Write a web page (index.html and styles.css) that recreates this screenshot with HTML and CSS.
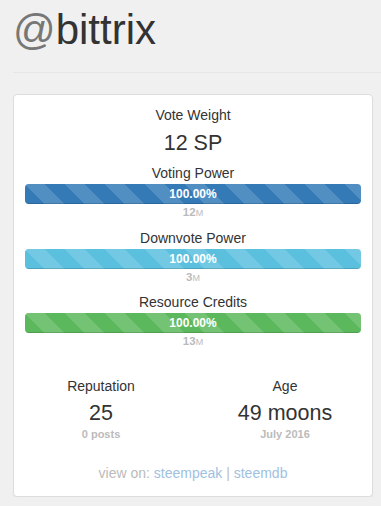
FILE: index.html
```html
<!DOCTYPE html>
<html>
  <head>
    <meta charset="utf-8" />
    <meta name="viewport" content="width=device-width, initial-scale=1" />
    <link rel="stylesheet" href="styles.css">
  </head>

  <body>
    <header class="page-head">
        <h1><span class="at">@</span>bittrix</h1>
    </header>
    <div class="panel">
        <div class="stat-title">Vote Weight</div>
        <div class="stat-value">12 SP</div>

        <div class="meters">
            <div class="meter">
                <div class="stat-title">Voting Power</div>
                <div class="progress"><div class="bar bar-blue">100.00%</div></div>
                <div class="sub">12<small>M</small></div>
            </div>
            <div class="meter">
                <div class="stat-title">Downvote Power</div>
                <div class="progress"><div class="bar bar-info">100.00%</div></div>
                <div class="sub">3<small>M</small></div>
            </div>
            <div class="meter">
                <div class="stat-title">Resource Credits</div>
                <div class="progress"><div class="bar bar-green">100.00%</div></div>
                <div class="sub">13<small>M</small></div>
            </div>
        </div>

        <div class="stat-row">
            <div class="col">
                <div class="stat-title">Reputation</div>
                <div class="stat-value">25</div>
                <div class="note">0 posts</div>
            </div>
            <div class="col">
                <div class="stat-title">Age</div>
                <div class="stat-value">49 moons</div>
                <div class="note">July 2016</div>
            </div>
        </div>

        <div class="links">view on: <a href="#">steempeak</a> | <a href="#">steemdb</a></div>
    </div>
  </body>
</html>
```

FILE: styles.css
```css
body {
  margin: 0;
  background: #f0f0f0;
  color: #333;
  font-family: "Liberation Sans", Arial, Helvetica, sans-serif;
  font-size: 14px;
  line-height: 20px;
}
.page-head {
  margin-left: 13px;
  border-bottom: 1px solid #e6e6e6;
  padding-top: 7px;
  padding-bottom: 20px;
}
.page-head h1 {
  margin: 0;
  font-size: 42px;
  line-height: 45px;
  font-weight: normal;
  color: #333;
}
.page-head .at {
  color: #777;
}
.panel {
  width: 336px;
  margin: 21px 0 0 13px;
  padding: 10px 11px 13px;
  background: #fff;
  border: 1px solid #ddd;
  border-radius: 4px;
  box-shadow: 0 1px 1px rgba(0, 0, 0, 0.05);
  text-align: center;
}
.stat-title {
  line-height: 20px;
}
.stat-value {
  margin-top: 3px;
  font-size: 21.5px;
  line-height: 30px;
}
.meters {
  display: flex;
  flex-direction: column;
  gap: 8.5px;
  margin-top: 5px;
}
.progress {
  height: 20px;
  margin-top: 1px;
  background: #f5f5f5;
  border-radius: 4px;
  overflow: hidden;
  box-shadow: inset 0 1px 2px rgba(0, 0, 0, 0.1);
}
.bar {
  width: 100%;
  height: 100%;
  color: #fff;
  font-size: 12px;
  font-weight: bold;
  line-height: 20px;
  background-image: linear-gradient(45deg, rgba(255, 255, 255, 0.15) 25%, transparent 25%, transparent 50%, rgba(255, 255, 255, 0.15) 50%, rgba(255, 255, 255, 0.15) 75%, transparent 75%, transparent);
  background-size: 40px 40px;
  box-shadow: inset 0 -1px 0 rgba(0, 0, 0, 0.15);
}
.bar-blue {
  background-color: #337ab7;
}
.bar-info {
  background-color: #5bc0de;
}
.bar-green {
  background-color: #5cb85c;
}
.sub {
  height: 14px;
  margin-top: 1px;
  color: #bbb;
  font-size: 11.5px;
  font-weight: bold;
  line-height: 14px;
}
.sub small {
  font-size: 9px;
  font-weight: normal;
}
.stat-row {
  display: grid;
  grid-template-columns: 1fr 1fr;
  margin: 28px -16px 0;
}
.stat-row .stat-value {
  line-height: 28px;
}
.note {
  color: #bbb;
  font-size: 11px;
  font-weight: bold;
  line-height: 14px;
}
.links {
  margin-top: 22px;
  color: #bbb;
}
.links a {
  color: #9fc1e2;
  text-decoration: none;
}
```
